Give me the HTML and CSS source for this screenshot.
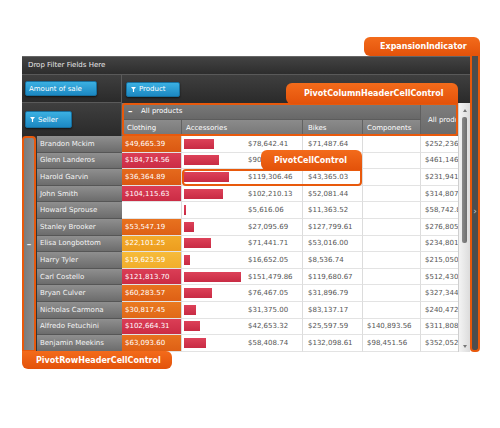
FILE: index.html
```html
<!DOCTYPE html>
<html>
<head>
<meta charset="utf-8">
<title>Pivot grid</title>
<link rel="stylesheet" href="styles.css">
</head>
<body>
<div class="stage">
  <div class="pivot-wrap">
    <div class="pivot">
      <div class="filter-bar">Drop Filter Fields Here</div>
      <div class="fields-row">
        <div class="data-fields"><span class="btn btn-amount">Amount of sale</span></div>
        <div class="col-fields"><span class="btn btn-product"><svg class="funnel" viewBox="0 0 6 6"><polygon points="0,0 6,0 3.7,2.6 3.7,6 2.3,6 2.3,2.6" fill="#fff"/></svg>Product</span></div>
      </div>
      <div class="main">
        <div class="row-fields"><span class="btn btn-seller"><svg class="funnel" viewBox="0 0 6 6"><polygon points="0,0 6,0 3.7,2.6 3.7,6 2.3,6 2.3,2.6" fill="#fff"/></svg>Seller</span></div>
        <div class="col-header">
          <div class="ch-main">
            <div class="ch-group"><span class="minus">–</span>All products</div>
            <div class="ch-cols"><div>Clothing</div><div>Accessories</div><div>Bikes</div><div>Components</div></div>
          </div>
          <div class="ch-total">All products</div>
        </div>
        <div class="scrollbar">
          <span class="arrow-up"></span>
          <span class="thumb"></span>
          <span class="arrow-down"></span>
        </div>
        <div class="row-header">
          <div class="expander"><span>–</span></div>
          <div class="names">
            <div class="name">Brandon Mckim</div>
            <div class="name">Glenn Landeros</div>
            <div class="name">Harold Garvin</div>
            <div class="name">John Smith</div>
            <div class="name">Howard Sprouse</div>
            <div class="name">Stanley Brooker</div>
            <div class="name">Elisa Longbottom</div>
            <div class="name">Harry Tyler</div>
            <div class="name">Carl Costello</div>
            <div class="name">Bryan Culver</div>
            <div class="name">Nicholas Carmona</div>
            <div class="name">Alfredo Fetuchini</div>
            <div class="name">Benjamin Meekins</div>
          </div>
        </div>
        <div class="viewport">
          <div class="cells">
            <div class="c clo orange">$49,665.39</div>
            <div class="c acc"><span class="bar-area"><span class="bar" style="width:30px"></span></span>$78,642.41</div>
            <div class="c">$71,487.64</div>
            <div class="c comp"></div>
            <div class="c tot">$252,236.44</div>

            <div class="c clo crimson">$184,714.56</div>
            <div class="c acc"><span class="bar-area"><span class="bar" style="width:35px"></span></span>$90,813.27</div>
            <div class="c">$74,126.90</div>
            <div class="c comp"></div>
            <div class="c tot">$461,146.73</div>

            <div class="c clo orange">$36,364.89</div>
            <div class="c acc"><span class="bar-area"><span class="bar" style="width:45px"></span></span>$119,306.46</div>
            <div class="c">$43,365.03</div>
            <div class="c comp"></div>
            <div class="c tot">$231,941.38</div>

            <div class="c clo crimson">$104,115.63</div>
            <div class="c acc"><span class="bar-area"><span class="bar" style="width:39px"></span></span>$102,210.13</div>
            <div class="c">$52,081.44</div>
            <div class="c comp"></div>
            <div class="c tot">$314,807.20</div>

            <div class="c clo"></div>
            <div class="c acc"><span class="bar-area"><span class="bar" style="width:2px"></span></span>$5,616.06</div>
            <div class="c">$11,363.52</div>
            <div class="c comp"></div>
            <div class="c tot">$58,742.85</div>

            <div class="c clo orange2">$53,547.19</div>
            <div class="c acc"><span class="bar-area"><span class="bar" style="width:10px"></span></span>$27,095.69</div>
            <div class="c">$127,799.61</div>
            <div class="c comp"></div>
            <div class="c tot">$276,805.12</div>

            <div class="c clo amber">$22,101.25</div>
            <div class="c acc"><span class="bar-area"><span class="bar" style="width:27px"></span></span>$71,441.71</div>
            <div class="c">$53,016.00</div>
            <div class="c comp"></div>
            <div class="c tot">$234,801.56</div>

            <div class="c clo yellow">$19,623.59</div>
            <div class="c acc"><span class="bar-area"><span class="bar" style="width:6px"></span></span>$16,652.05</div>
            <div class="c">$8,536.74</div>
            <div class="c comp"></div>
            <div class="c tot">$215,050.63</div>

            <div class="c clo crimson">$121,813.70</div>
            <div class="c acc"><span class="bar-area"><span class="bar" style="width:57px"></span></span>$151,479.86</div>
            <div class="c">$119,680.67</div>
            <div class="c comp"></div>
            <div class="c tot">$512,430.18</div>

            <div class="c clo orange2">$60,283.57</div>
            <div class="c acc"><span class="bar-area"><span class="bar" style="width:28px"></span></span>$76,467.05</div>
            <div class="c">$31,896.79</div>
            <div class="c comp"></div>
            <div class="c tot">$327,344.09</div>

            <div class="c clo orange3">$30,817.45</div>
            <div class="c acc"><span class="bar-area"><span class="bar" style="width:12px"></span></span>$31,375.00</div>
            <div class="c">$83,137.17</div>
            <div class="c comp"></div>
            <div class="c tot">$240,472.91</div>

            <div class="c clo crimson">$102,664.31</div>
            <div class="c acc"><span class="bar-area"><span class="bar" style="width:16px"></span></span>$42,653.32</div>
            <div class="c">$25,597.59</div>
            <div class="c comp">$140,893.56</div>
            <div class="c tot">$311,808.78</div>

            <div class="c clo orange2">$63,093.60</div>
            <div class="c acc"><span class="bar-area"><span class="bar" style="width:22px"></span></span>$58,408.74</div>
            <div class="c">$132,098.61</div>
            <div class="c comp">$98,451.56</div>
            <div class="c tot">$352,052.51</div>
          </div>
        </div>
      </div>
    </div>
    <div class="exp-indicator"><span>›</span></div>
  </div>

  <div class="tab tab-exp">ExpansionIndicator</div>
  <div class="tab tab-col">PivotColumnHeaderCellControl</div>
  <div class="cell-box"></div>
  <div class="tab tab-cell">PivotCellControl</div>
  <div class="tab tab-row">PivotRowHeaderCellControl</div>
</div>
</body>
</html>
```

FILE: styles.css
```css
* { box-sizing: border-box; }
html, body { margin: 0; padding: 0; background: #fff; }
body {
  width: 500px;
  height: 428px;
  overflow: hidden;
  font-family: "DejaVu Sans", Verdana, sans-serif;
  font-size: 7px;
}
.stage {
  position: relative;
  width: 500px;
  height: 428px;
  padding: 56px 0 0 22px;
}
.pivot-wrap { display: flex; align-items: flex-start; }
.pivot { width: 448px; background: #333; flex: none; }

.filter-bar {
  height: 19px;
  line-height: 17px;
  padding-left: 6px;
  color: #e8e8e8;
  background: linear-gradient(#434343, #2d2d2d);
  border-top: 1px solid #666;
  border-bottom: 1px solid #595959;
}
.fields-row {
  display: grid;
  grid-template-columns: 100px 348px;
  height: 28px;
}
.data-fields, .col-fields, .row-fields {
  display: flex;
  align-items: center;
  background: linear-gradient(#3f3f3f, #2a2a2a);
}
.data-fields { padding-left: 3px; border-right: 1px solid #5a5a5a; border-bottom: 1px solid #5a5a5a; }
.col-fields { padding-left: 4px; }
.row-fields { padding-left: 3px; border-right: 1px solid #5a5a5a; }

.btn {
  display: inline-flex;
  align-items: center;
  height: 15px;
  padding: 0 3px;
  color: #fff;
  white-space: nowrap;
  background: linear-gradient(#3bb0e2, #1c88c2);
  border: 1px solid #17709f;
  border-radius: 2px;
  box-shadow: 0 1px 2px rgba(0, 0, 0, 0.6);
}
.btn-amount { width: 72px; }
.btn-product { width: 54px; padding-left: 4px; }
.btn-seller { width: 47px; height: 17px; padding-left: 4px; }
.funnel { width: 5px; height: 5px; margin-right: 3px; flex: none; }

.main {
  display: grid;
  grid-template-columns: 100px 336px 12px;
  grid-template-rows: 33px auto;
}
.row-fields { grid-column: 1; grid-row: 1; }

.col-header {
  grid-column: 2;
  grid-row: 1;
  position: relative;
  display: flex;
  overflow: hidden;
  background: #6d6d6d;
}
.col-header::after {
  content: "";
  position: absolute;
  inset: 0;
  border: 2px solid #e8590c;
  border-radius: 3px;
}
.ch-main { width: 299px; flex: none; display: flex; flex-direction: column; }
.ch-group {
  height: 17px;
  display: flex;
  align-items: center;
  padding-left: 6px;
  color: #fff;
  background: linear-gradient(#7a7a7a, #686868);
  border-bottom: 1px solid #5c5c5c;
  border-right: 1px solid #5f5f5f;
}
.minus { width: 13px; flex: none; font-size: 9px; font-weight: bold; }
.ch-cols {
  flex: 1;
  display: grid;
  grid-template-columns: 60px 121px 60px 58px;
  background: linear-gradient(#8b8b8b, #767676);
}
.ch-cols div {
  display: flex;
  align-items: center;
  padding-left: 5px;
  color: #fff;
  border-right: 1px solid #626262;
}
.ch-cols div:nth-child(2), .ch-cols div:nth-child(4) { padding-left: 4px; }
.ch-total {
  width: 60px;
  flex: none;
  display: flex;
  align-items: center;
  padding-left: 7px;
  color: #fff;
  white-space: nowrap;
  background: linear-gradient(#7e7e7e, #6a6a6a);
}

.scrollbar {
  grid-column: 3;
  grid-row: 1 / span 2;
  display: flex;
  flex-direction: column;
  align-items: center;
  padding: 6px 0 4px;
  background: linear-gradient(90deg, #f3f3f3, #dcdcdc);
  border-left: 1px solid #cfcfcf;
}
.arrow-up, .arrow-down {
  width: 0;
  height: 0;
  border-left: 2.5px solid transparent;
  border-right: 2.5px solid transparent;
}
.arrow-up { border-bottom: 3px solid #777; }
.arrow-down { border-top: 3px solid #777; margin-top: auto; }
.thumb {
  width: 5px;
  height: 126px;
  margin-top: 5px;
  background: linear-gradient(90deg, #8a8a8a, #6e6e6e);
  border-radius: 2px;
}

.row-header {
  grid-column: 1;
  grid-row: 2;
  display: flex;
  gap: 1px;
  background: #333;
}
.expander {
  width: 14px;
  flex: none;
  display: flex;
  align-items: center;
  justify-content: center;
  color: #eee;
  font-size: 9px;
  font-weight: bold;
  background: linear-gradient(90deg, #7c7c7c, #8c8c8c);
  border: 2px solid #e8590c;
  border-radius: 4px 4px 0 0;
}
.names { flex: 1; display: flex; flex-direction: column; }
.name {
  height: 16.6px;
  display: flex;
  align-items: center;
  padding-left: 3px;
  white-space: nowrap;
  color: #f4f4f4;
  background: linear-gradient(#8f8f8f, #6c6c6c);
  border-bottom: 1px solid #565656;
}

.viewport { grid-column: 2; grid-row: 2; overflow: hidden; background: #fff; }
.cells {
  display: grid;
  grid-template-columns: 60px 121px 60px 58px 60px;
  grid-auto-rows: 16.6px;
  width: 359px;
}
.c {
  display: flex;
  align-items: center;
  padding-left: 5px;
  color: #555;
  white-space: nowrap;
  overflow: hidden;
  border-right: 1px solid #dcdcdc;
  border-bottom: 1px solid #e3e3e3;
}
.c.clo { padding-left: 3px; color: #fff; }
.c.acc { padding-left: 2px; }
.c.comp, .c.tot { padding-left: 4px; }
.orange { background: linear-gradient(#e56a1d, #da5812); }
.orange2 { background: linear-gradient(#e8721f, #de6015); }
.orange3 { background: linear-gradient(#ea7a20, #e06917); }
.crimson { background: linear-gradient(#db3e56, #cb2c45); }
.amber { background: linear-gradient(#f3ab2a, #ec9d1f); }
.yellow { background: linear-gradient(#f6bb3b, #f1ae2b); }
.bar-area { width: 64px; flex: none; display: flex; align-items: center; }
.bar { height: 10px; background: linear-gradient(#dd4259, #c82b44); }

.exp-indicator {
  width: 10px;
  height: 300px;
  margin-top: -4px;
  flex: none;
  display: flex;
  justify-content: center;
  padding-top: 154px;
  color: #cfcfcf;
  font-size: 9px;
  background: #4d4d4d;
  border: 2px solid #e8590c;
  border-top: none;
  border-radius: 0 0 4px 4px;
}

.tab {
  position: absolute;
  display: flex;
  align-items: center;
  color: #fff;
  font-weight: bold;
  font-size: 8px;
  white-space: nowrap;
  background: linear-gradient(#f36b1b, #e3520a);
}
.tab-exp { left: 364px; top: 37px; width: 116px; height: 19px; padding-left: 16px; border-radius: 6px 6px 0 6px; }
.tab-col { left: 286px; top: 83px; width: 172px; height: 21px; padding-left: 18px; border-radius: 6px 6px 0 6px; }
.tab-cell { left: 261px; top: 150px; width: 101px; height: 20px; padding-left: 13px; border-radius: 6px 6px 0 6px; }
.tab-row { left: 22px; top: 351px; width: 150px; height: 18px; padding-left: 14px; border-radius: 0 6px 6px 6px; }
.cell-box {
  position: absolute;
  left: 182px;
  top: 169px;
  width: 180px;
  height: 17px;
  border: 2px solid #e8590c;
  border-radius: 4px 0 4px 4px;
}
```
